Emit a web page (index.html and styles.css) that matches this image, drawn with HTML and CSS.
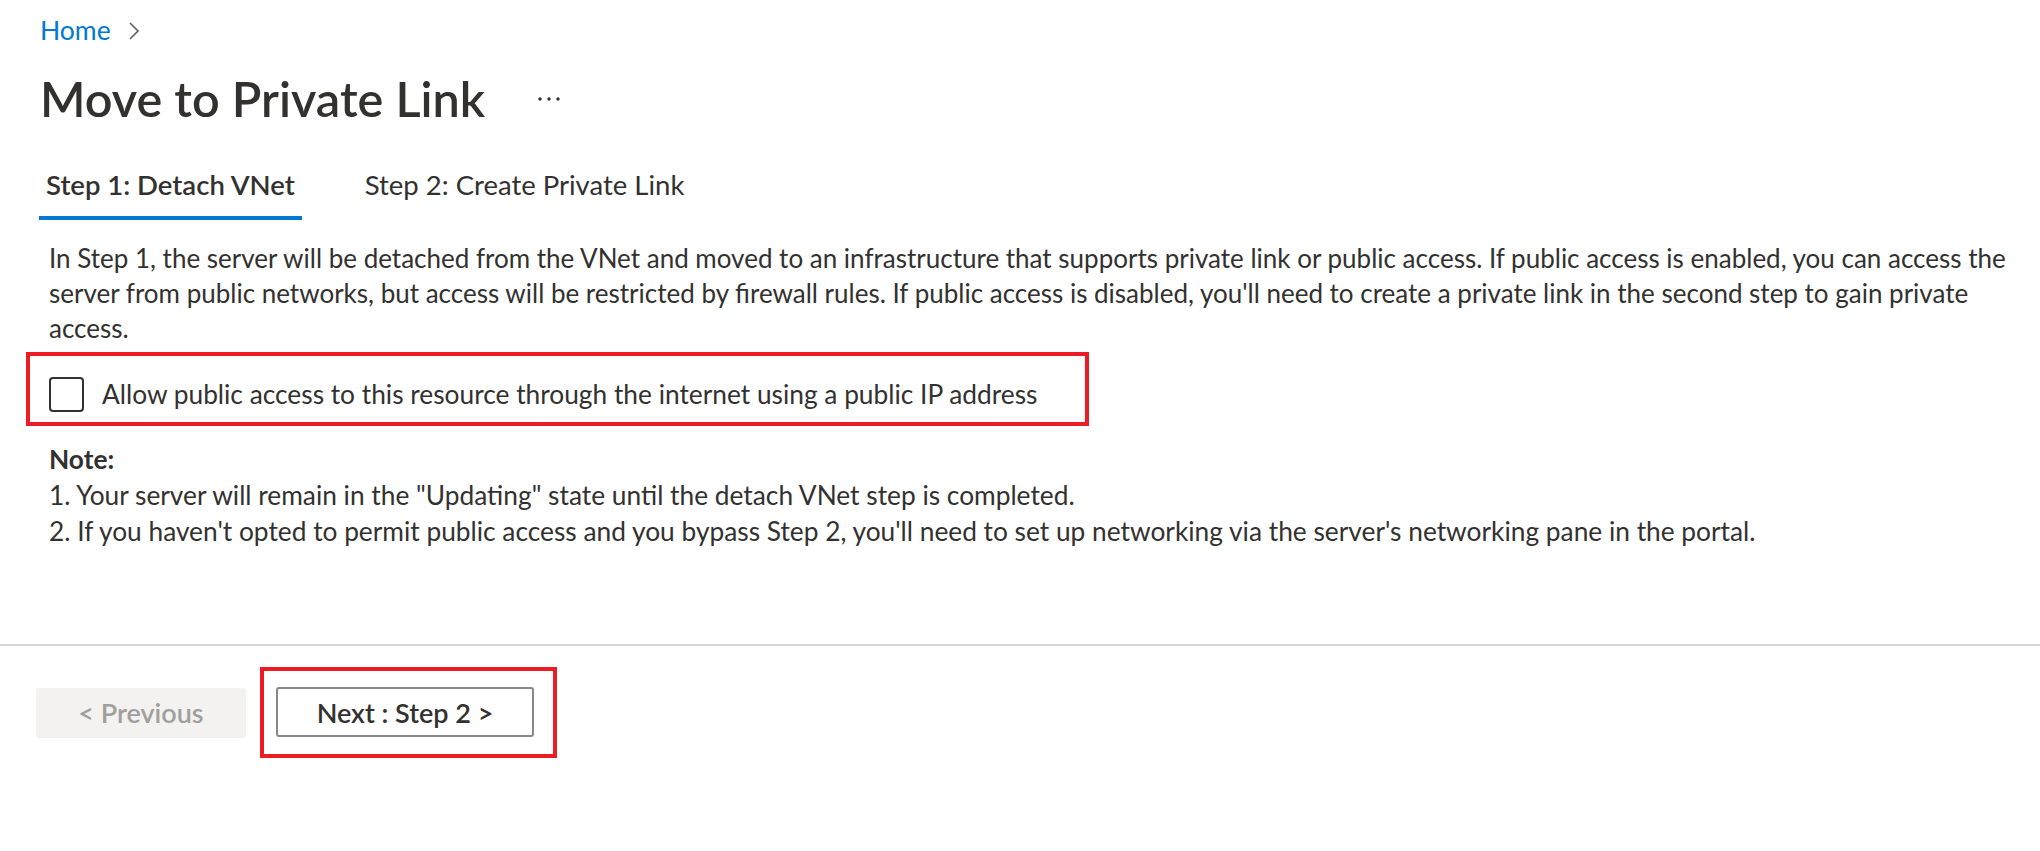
FILE: index.html
```html
<!DOCTYPE html>
<html lang="en">
<head>
<meta charset="utf-8">
<title>Move to Private Link</title>
<link rel="stylesheet" href="styles.css">
</head>
<body>
<div class="page">
  <nav class="breadcrumb">
    <a class="crumb-link" href="#">Home</a>
    <svg class="crumb-chevron" width="12" height="18" viewBox="0 0 12 18" aria-hidden="true"><path d="M2 1 L10 9 L2 17" fill="none" stroke="#605e5c" stroke-width="1.6"/></svg>
  </nav>
  <header class="title-row">
    <h1 class="title">Move to Private Link</h1>
    <svg class="more" width="24" height="6" viewBox="0 0 24 6" aria-hidden="true"><circle cx="3" cy="3" r="1.7" fill="#323130"/><circle cx="12" cy="3" r="1.7" fill="#323130"/><circle cx="21" cy="3" r="1.7" fill="#323130"/></svg>
  </header>
  <div class="tabs">
    <div class="tab active">Step 1: Detach VNet</div>
    <div class="tab">Step 2: Create Private Link</div>
  </div>
  <p class="intro">In Step 1, the server will be detached from the VNet and moved to an infrastructure that supports private link or public access. If public access is enabled, you can access the server from public networks, but access will be restricted by firewall rules. If public access is disabled, you'll need to create a private link in the second step to gain private access.</p>
  <div class="highlight check-row">
    <span class="checkbox"></span>
    <span class="check-label">Allow public access to this resource through the internet using a public IP address</span>
  </div>
  <div class="note">
    <div class="note-title">Note:</div>
    <div class="note-line">1. Your server will remain in the "Updating" state until the detach VNet step is completed.</div>
    <div class="note-line">2. If you haven't opted to permit public access and you bypass Step 2, you'll need to set up networking via the server's networking pane in the portal.</div>
  </div>
</div>
<footer class="footer">
  <button class="btn btn-disabled" type="button">&lt; Previous</button>
  <div class="highlight next-wrap">
    <button class="btn btn-next" type="button">Next : Step 2 &gt;</button>
  </div>
</footer>
</body>
</html>
```
FILE: styles.css
```css
html, body {
  margin: 0;
  padding: 0;
  background: #ffffff;
}
body {
  font-family: "Lato", "Liberation Sans", sans-serif;
  font-size: 26px;
  line-height: 35px;
  color: #323130;
}
.page {
  padding: 13px 10px 0 40px;
}
.breadcrumb {
  display: flex;
  align-items: center;
  height: 35px;
}
.crumb-link {
  color: #0078d4;
  text-decoration: none;
  font-size: 26.5px;
}
.crumb-chevron {
  margin-left: 17px;
  margin-top: 1px;
}
.title-row {
  display: flex;
  align-items: center;
  margin-top: 20px;
  height: 60px;
}
.title {
  margin: 0;
  font-size: 48.6px;
  line-height: 60px;
  font-weight: 600;
  color: #323130;
}
.more {
  margin-left: 52px;
  margin-top: 2px;
}
.tabs {
  display: flex;
  margin-top: 39px;
  margin-left: -1px;
  gap: 56px;
}
.tab {
  font-size: 27.5px;
  line-height: 35px;
  padding: 0 7px 14px;
  border-bottom: 4px solid transparent;
}
.tab.active {
  font-weight: 600;
  border-bottom-color: #0078d4;
}
.intro {
  margin: 21px 0 0 9px;
  line-height: 35px;
}
.highlight {
  border: 4px solid #ec1c24;
}
.check-row {
  display: flex;
  align-items: center;
  box-sizing: border-box;
  width: 1063px;
  height: 74px;
  margin: 6px 0 0 -14px;
  padding: 10px 0 0 19px;
}
.checkbox {
  box-sizing: border-box;
  width: 35px;
  height: 35px;
  border: 2px solid #323130;
  border-radius: 4px;
  flex: none;
}
.check-label {
  margin-left: 18px;
  font-size: 26.3px;
}
.note {
  margin: 16px 0 0 9px;
  font-size: 26.3px;
}
.note-title {
  font-weight: 700;
}
.note-line {
  line-height: 36px;
}
.footer {
  margin-top: 95px;
  border-top: 2px solid #d6d6d6;
  padding: 21px 0 0 36px;
  display: flex;
  align-items: center;
  gap: 14px;
}
.btn {
  box-sizing: border-box;
  height: 50px;
  font-family: inherit;
  font-size: 27px;
  font-weight: 600;
  border-radius: 3px;
  padding: 0;
  cursor: pointer;
}
.btn-disabled {
  width: 210px;
  background: #f3f2f1;
  border: none;
  color: #a19f9d;
}
.next-wrap {
  display: flex;
  padding: 16px 19px 17px 12px;
}
.btn-next {
  width: 258px;
  background: #ffffff;
  border: 2px solid #8a8886;
  color: #323130;
}
```
